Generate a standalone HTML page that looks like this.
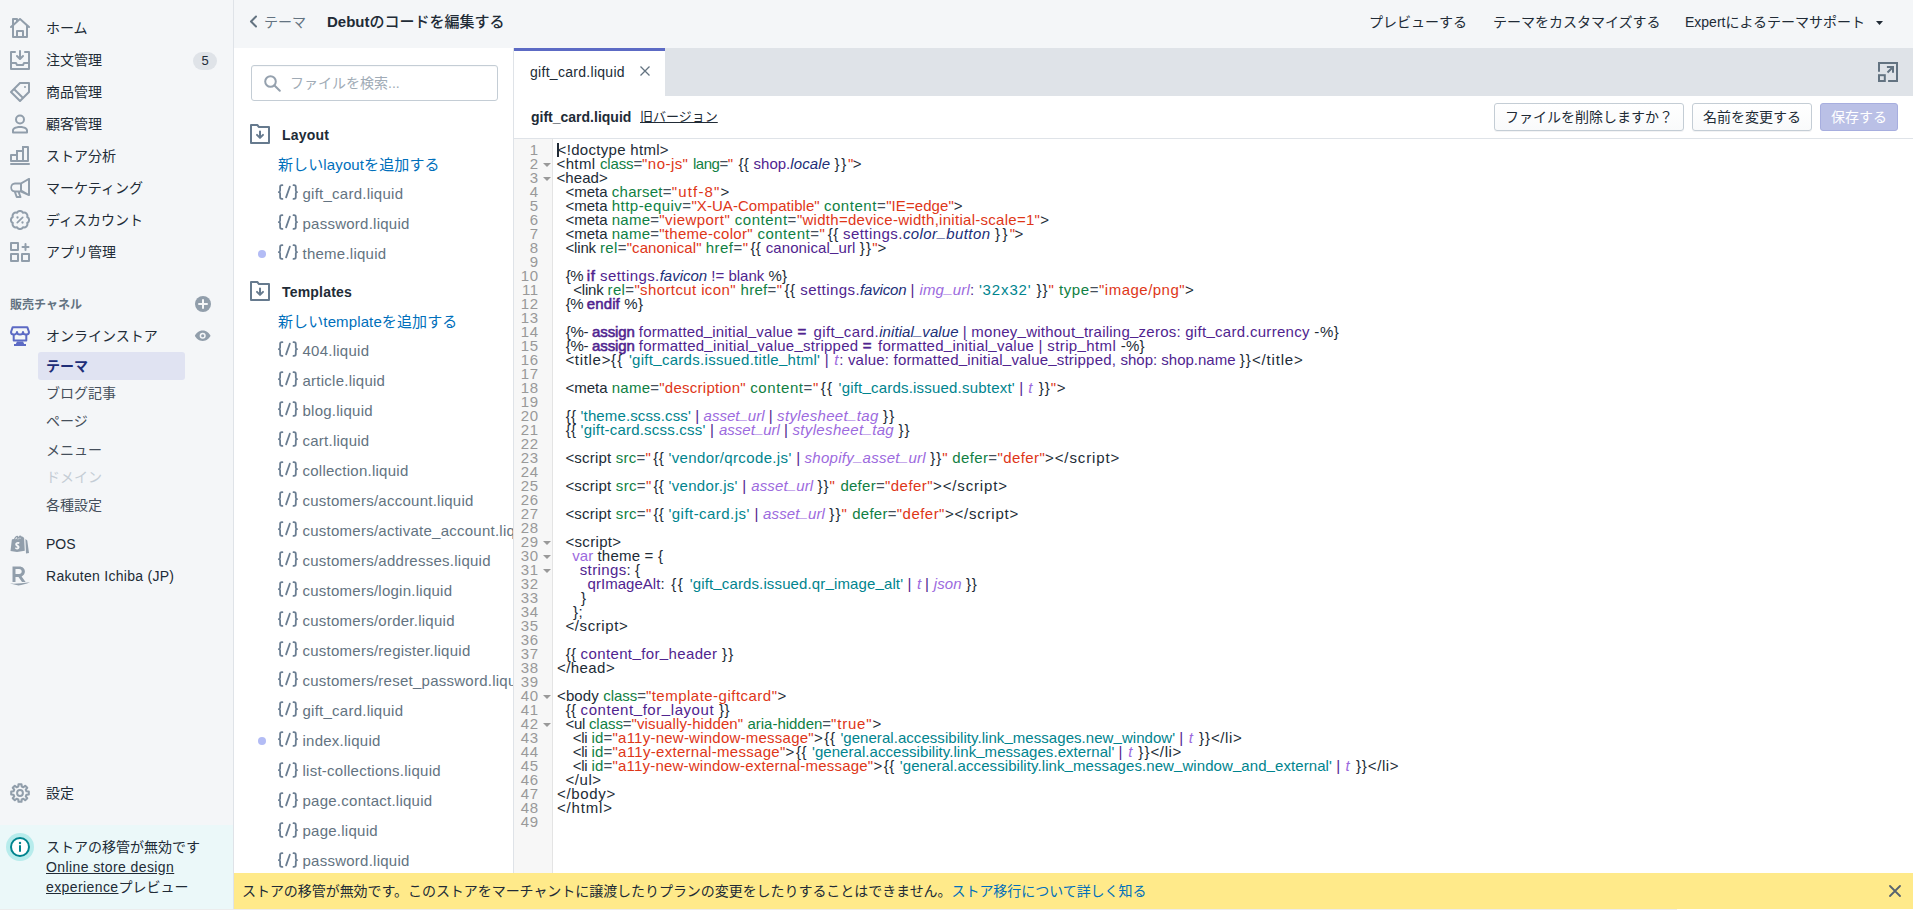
<!DOCTYPE html>
<html lang="ja">
<head>
<meta charset="utf-8">
<title>Debutのコードを編集する</title>
<style>
*{box-sizing:border-box;margin:0;padding:0}
html,body{width:1913px;height:910px;overflow:hidden;background:#f4f6f8}
body{font-family:"Liberation Sans","Noto Sans CJK JP",sans-serif;font-size:14px;color:#212b36;position:relative}
a{color:inherit}
/* NAV */
#nav{position:absolute;left:0;top:0;width:234px;height:910px;background:#f4f6f8;border-right:1px solid #dfe3e8}
.ni{position:absolute;left:0;width:233px;height:32px}
.ni svg{position:absolute;left:10px;top:6px;width:20px;height:20px;fill:#919eab}
.ni .t{position:absolute;left:46px;top:0;line-height:32px;font-size:14px;white-space:nowrap;color:#212b36}
.badge{position:absolute;left:193px;top:8px;width:24px;height:18px;border-radius:9px;background:#dfe3e8;text-align:center;font-size:13px;line-height:18px;color:#212b36}
.sub{position:absolute;left:46px;height:28px;line-height:28px;font-size:14px;color:#454f5b;white-space:nowrap}
#sel{position:absolute;left:38px;top:352px;width:147px;height:28px;border-radius:3px;background:#e0e3f2}
#chan{position:absolute;left:10px;top:295.500px;line-height:18px;font-size:12px;color:#637381;font-weight:700}
#info{position:absolute;left:0;top:825px;width:233px;height:85px;background:#ebf8f9}
#info .l{position:absolute;left:46px;line-height:20px;font-size:14px;white-space:nowrap;color:#212b36}
/* TOPBAR */
#top{position:absolute;left:234px;top:0;width:1679px;height:48px;background:#f4f6f8}
#top .x{position:absolute;top:11px;line-height:22px;font-size:14px;white-space:nowrap;color:#212b36}
/* TREE */
#tree{position:absolute;left:234px;top:48px;width:280px;height:825px;background:#fff;border-right:1px solid #dfe3e8;overflow:hidden}
#search{position:absolute;left:17px;top:17px;width:247px;height:36px;border:1px solid #c4cdd5;border-radius:3px;background:#fff;box-shadow:inset 0 1px 0 0 rgba(99,115,129,.05)}
#search span{position:absolute;left:38px;top:0;line-height:34px;font-size:14px;color:#a0abb6;white-space:nowrap}
.hd{position:absolute;left:48px;font-size:14px;font-weight:bold;line-height:20px;color:#212b36;white-space:nowrap;letter-spacing:.2px;margin-top:1px}
.fold{position:absolute;left:16px;width:20px;height:20px}
.lk{position:absolute;left:44px;font-size:15px;line-height:20px;color:#006fbb;white-space:nowrap;letter-spacing:.12px;margin-top:.5px}
.f{position:absolute;left:68px;font-size:15px;color:#637381;white-space:nowrap;line-height:20px;letter-spacing:.25px;margin-left:.5px}
.fi{position:absolute;left:43px;width:22px;height:18px}
.dot{position:absolute;left:24px;width:8px;height:8px;border-radius:4px;background:#b3bcf5}
/* EDITOR */
#ed{position:absolute;left:514px;top:48px;width:1399px;height:825px;background:#fff;overflow:hidden}
#tabs{position:absolute;left:0;top:0;width:1399px;height:48px;background:#dfe3e8}
#tab{position:absolute;left:0;top:0;width:151px;height:48px;background:#fff;border-top:3px solid #5c6ac4}
#tab span{position:absolute;left:16px;top:10.500px;line-height:20px;font-size:14px;color:#212b36;white-space:nowrap;letter-spacing:.29px}
#fh{position:absolute;left:0;top:48px;width:1399px;height:43px;border-bottom:1px solid #dfe3e8;background:#fff}
.btn{position:absolute;top:7px;height:28px;border:1px solid #c4cdd5;border-radius:3px;background:linear-gradient(#fff,#f9fafb);box-shadow:0 1px 0 0 rgba(22,29,37,.05);font-size:14px;line-height:26px;text-align:center;color:#212b36;white-space:nowrap}
#gut{position:absolute;left:0;top:91px;width:39px;height:734px;background:#f7f7f7;border-right:1px solid #e4e4e4}
.ln{position:absolute;right:13.500px;height:14px;line-height:14px;font-size:15px;color:#999;white-space:nowrap;letter-spacing:.5px}
.fa{position:absolute;left:29px;width:0;height:0;border-left:4px solid transparent;border-right:4px solid transparent;border-top:4px solid #999}
#code{position:absolute;left:0;top:95px;width:1399px;height:730px;font-size:15px;color:#212b36}
.cl{position:absolute;height:14px;line-height:14px;white-space:pre;font-size:15px}
.a{color:#108043}.e{color:#454f5b}.s{color:#de3618}.v{color:#50248f}.p{color:#202e78;font-style:italic}
.k{color:#50248f;-webkit-text-stroke:.55px #50248f}.f2{color:#9c6ade;font-style:italic}.q{color:#00848e}.j{color:#9c6ade}
.u{position:relative;top:-2px}
#cur{position:absolute;left:43px;top:0;width:2px;height:14px;background:#212b36}
/* BANNER */
#ban{position:absolute;left:234px;top:873px;width:1679px;height:36px;background:#ffea8a}
#strip{position:absolute;left:0;top:909px;width:1913px;height:1px;background:#ececec}
#strip i{position:absolute;left:1677px;top:0;width:236px;height:1px;background:#fff}
#ban span{position:absolute;left:8px;top:7px;line-height:22px;font-size:14px;white-space:nowrap;color:#212b36;letter-spacing:-.05px}
#ban a{color:#006fbb;text-decoration:none}
</style>
</head>
<body>
<div id="nav">
<div class="ni" style="top:12px"><svg viewBox="0 0 20 20"><path d="M19.664 8.252l-9-8a1 1 0 0 0-1.328 0L8 1.44V1a1 1 0 0 0-1-1H3a1 1 0 0 0-1 1v5.773L.336 8.252a1.001 1.001 0 0 0 1.328 1.496L2 9.449V19a1 1 0 0 0 1 1h14a1 1 0 0 0 1-1V9.449l.336.299a.997.997 0 0 0 1.411-.083 1.001 1.001 0 0 0-.083-1.413zM16 18h-2v-5a1 1 0 0 0-1-1H7a1 1 0 0 0-1 1v5H4V7.671l6-5.333 6 5.333V18zm-8 0v-4h4v4H8zM4 2h2v1.218L4 4.996V2z"/></svg><span class="t">ホーム</span></div>
<div class="ni" style="top:44px"><svg viewBox="0 0 20 20"><path fill-rule="evenodd" d="M2 18v-4h3.382l.723 1.447c.17.339.516.553.895.553h6c.379 0 .725-.214.895-.553L14.618 14H18v4H2zM19 1a1 1 0 0 1 1 1v17a1 1 0 0 1-1 1H1a1 1 0 0 1-1-1V2a1 1 0 0 1 1-1h4a1 1 0 0 1 0 2H2v9h4c.379 0 .725.214.895.553L7.618 14h4.764l.723-1.447c.17-.339.516-.553.895-.553h4V3h-3a1 1 0 0 1 0-2h4zM6.293 6.707a.999.999 0 1 1 1.414-1.414L9 6.586V1a1 1 0 0 1 2 0v5.586l1.293-1.293a.999.999 0 1 1 1.414 1.414l-3 3a.997.997 0 0 1-1.414 0l-3-3z"/></svg><span class="t">注文管理</span><span class="badge">5</span></div>
<div class="ni" style="top:76px"><svg viewBox="0 0 20 20"><path d="M19 0h-9c-.265 0-.52.106-.707.293l-9 9a.999.999 0 0 0 0 1.414l9 9a.997.997 0 0 0 1.414 0l9-9A.997.997 0 0 0 20 10V1a1 1 0 0 0-1-1zm-9 17.586L2.414 10 4 8.414 11.586 16 10 17.586zm8-8l-5 5L5.414 7l5-5H18v7.586zM15 6a1 1 0 1 0 0-2 1 1 0 0 0 0 2"/></svg><span class="t">商品管理</span></div>
<div class="ni" style="top:108px"><svg viewBox="0 0 20 20"><path d="M10 2.5a3 3 0 1 1 0 6 3 3 0 0 1 0-6zm0 8a5 5 0 1 0 0-10 5 5 0 0 0 0 10zm0 1.500c-5.200 0-8 2.200-8 4.300v2.200a1 1 0 0 0 1 1h14a1 1 0 0 0 1-1v-2.200c0-2.100-2.800-4.300-8-4.300zm6 5.500H4v-1.300c.2-.8 1.900-2.200 6-2.200s5.800 1.400 6 2.200v1.300z"/></svg><span class="t">顧客管理</span></div>
<div class="ni" style="top:140px"><svg viewBox="0 0 20 20"><path d="M1 17h18a1 1 0 0 1 0 2H1a1 1 0 0 1 0-2zM1 8h5V4h6V0h6a1 1 0 0 1 1 1v14a1 1 0 0 1-1 1H1a1 1 0 0 1-1-1V9a1 1 0 0 1 1-1zm1 2v4h4v-4H2zm6-4v8h4V6H8zm6-4v12h3V2h-3z"/></svg><span class="t">ストア分析</span></div>
<div class="ni" style="top:172px"><svg viewBox="0 0 20 20"><path d="M18.600.100a1 1 0 0 1 1.400.900v16a1 1 0 0 1-1.400.900L10.800 14.500H9.900l1.500 4.200a1 1 0 0 1-.9 1.300H6.700a1 1 0 0 1-.9-.700L4 14.300A5 5 0 0 1 5 4.500h5.800L18.600.100zM18 2.600l-6 3.400v6l6 3.400V2.600zM10 6.500H5a3 3 0 0 0 0 6h5v-6zM6.100 14.500l1.300 3.500h1.700l-1.300-3.500H6.100z"/></svg><span class="t">マーケティング</span></div>
<div class="ni" style="top:204px"><svg viewBox="0 0 20 20"><path d="M17.21 12.98A3.3 3.3 0 0 1 12.98 17.21A3.3 3.3 0 0 1 7.02 17.21A3.3 3.3 0 0 1 2.79 12.98A3.3 3.3 0 0 1 2.79 7.02A3.3 3.3 0 0 1 7.02 2.79A3.3 3.3 0 0 1 12.98 2.79A3.3 3.3 0 0 1 17.21 7.02A3.3 3.3 0 0 1 17.21 12.98z" fill="none" stroke="#919eab" stroke-width="2" stroke-linejoin="round"/><path d="M7.300 12.700l5.400-5.400" stroke="#919eab" stroke-width="1.700" stroke-linecap="round" fill="none"/><circle cx="7.500" cy="7.500" r="1.150"/><circle cx="12.500" cy="12.500" r="1.150"/></svg><span class="t">ディスカウント</span></div>
<div class="ni" style="top:236px"><svg viewBox="0 0 20 20"><path d="M1 0h7a1 1 0 0 1 1 1v7a1 1 0 0 1-1 1H1a1 1 0 0 1-1-1V1a1 1 0 0 1 1-1zm1 2v5h5V2H2zM1 11h7a1 1 0 0 1 1 1v7a1 1 0 0 1-1 1H1a1 1 0 0 1-1-1v-7a1 1 0 0 1 1-1zm1 2v5h5v-5H2zM12 11h7a1 1 0 0 1 1 1v7a1 1 0 0 1-1 1h-7a1 1 0 0 1-1-1v-7a1 1 0 0 1 1-1zm1 2v5h5v-5h-5zM15.500 1a1 1 0 0 1 1 1v2h2a1 1 0 0 1 0 2h-2v2a1 1 0 0 1-2 0V6h-2a1 1 0 0 1 0-2h2V2a1 1 0 0 1 1-1z"/></svg><span class="t">アプリ管理</span></div>

<div id="chan">販売チャネル</div>
<svg style="position:absolute;left:195px;top:296px;width:16px;height:16px" viewBox="0 0 16 16"><circle cx="8" cy="8" r="8" fill="#919eab"/><path d="M8 4v8M4 8h8" stroke="#f4f6f8" stroke-width="2" stroke-linecap="round"/></svg>

<div class="ni" style="top:320px"><svg viewBox="0 0 20 20" style="fill:none"><path d="M2.700 1.200H17.300L19 6a3 2.600 0 0 1-6 0a3 2.600 0 0 1-6 0a3 2.600 0 0 1-6 0z" stroke="#5c6ac4" stroke-width="2" stroke-linejoin="round"/><path d="M3.700 9v5.500H16.300V9" stroke="#5c6ac4" stroke-width="2" stroke-linejoin="round"/><path d="M7 15.500h6l1.200 2.500H16v2H4v-2h1.800z" fill="#5c6ac4"/></svg><span class="t">オンラインストア</span>
<svg viewBox="0 0 20 20" style="left:194.200px;top:7.300px;width:17.400px;height:17.400px"><path d="M10 4C5.500 4 2.300 7.200 1 10c1.300 2.800 4.500 6 9 6s7.700-3.200 9-6c-1.300-2.800-4.500-6-9-6zm0 9.500a3.500 3.500 0 1 1 0-7 3.500 3.500 0 0 1 0 7zm0-5.300a1.800 1.800 0 1 0 0 3.600 1.800 1.800 0 0 0 0-3.600z"/></svg></div>
<div id="sel"></div>
<div class="sub" style="top:352px;color:#202e78;font-weight:bold">テーマ</div>
<div class="sub" style="top:379px">ブログ記事</div>
<div class="sub" style="top:407px">ページ</div>
<div class="sub" style="top:435.500px">メニュー</div>
<div class="sub" style="top:463px;color:#c4cdd5">ドメイン</div>
<div class="sub" style="top:491px">各種設定</div>

<div class="ni" style="top:528px"><svg viewBox="0 0 20 20"><path d="M8.500 1.500c.3-.9 1-1.500 1.700-1.500.6 0 1.100.4 1.400 1.100l1.300.1 1.200 1.200.7 12.800L7 16.500.500 15.400 1.800 4.600c0-.4.300-.7.700-.800L4 3.400C4.700 1.800 5.800.300 7.300.300c.5 0 .9.400 1.200 1.200zM7.200 1.400c-.8.100-1.600 1.200-2 2.400l1.400-.4c.1-.9.300-1.500.6-2zm1 .8c-.3.400-.5 1-.6 1.900l1-.3c-.1-.7-.2-1.200-.4-1.600zm1.400 1.300l.9-.3c-.1-.8-.3-1.300-.5-1.300s-.3.500-.4 1.600zM8 6.500c-1.700 0-2.800 1-2.800 2.300 0 2 2.300 2 2.300 3 0 .3-.2.500-.6.500-.7 0-1.400-.5-1.400-.5l-.4 1.400s.7.700 2 .7c1.400 0 2.400-.8 2.400-2.300 0-2-2.300-2.100-2.300-2.900 0-.2.100-.5.700-.5.600 0 1.100.3 1.100.3l.5-1.600S9 6.500 8 6.500zM15.400 3.600l1.600 1.100c.2.100.3.300.3.500l1.700 12.200-3 .6-.6-14.400z" transform="translate(0,1.500)"/></svg><span class="t">POS</span></div>
<div class="ni" style="top:560px"><svg viewBox="0 0 20 20"><path fill-rule="evenodd" d="M2.500.400h6.800c3.400 0 5.600 2.100 5.600 5.200 0 2.300-1.300 4-3.300 4.800l4 5.700h-3.600l-3.500-5.200H5.500v5.200H2.500V.400zm3 2.700v5h3.600c1.600 0 2.600-1 2.600-2.500s-1-2.500-2.600-2.500H5.500z"/><path d="M0 17.500c5 .400 12-.100 20-1.300-4 1.700-8 2.800-11.500 3.400z"/></svg><span class="t" style="letter-spacing:.28px">Rakuten Ichiba (JP)</span></div>

<div class="ni" style="top:777px"><svg viewBox="0 0 20 20"><path d="M8.32 3.51L8.53 1.22L11.47 1.22L11.68 3.51L13.40 4.23L15.17 2.75L17.25 4.83L15.77 6.60L16.49 8.32L18.78 8.53L18.78 11.47L16.49 11.68L15.77 13.40L17.25 15.17L15.17 17.25L13.40 15.77L11.68 16.49L11.47 18.78L8.53 18.78L8.32 16.49L6.60 15.77L4.83 17.25L2.75 15.17L4.23 13.40L3.51 11.68L1.22 11.47L1.22 8.53L3.51 8.32L4.23 6.60L2.75 4.83L4.83 2.75L6.60 4.23z" fill="none" stroke="#919eab" stroke-width="2.100" stroke-linejoin="round"/><circle cx="10" cy="10" r="2.900" fill="none" stroke="#919eab" stroke-width="2"/></svg><span class="t">設定</span></div>

<div id="info">
<svg style="position:absolute;left:6px;top:8px;width:28px;height:28px" viewBox="0 0 28 28"><circle cx="14" cy="14" r="14" fill="#b7ecec"/><circle cx="14" cy="14" r="9" fill="#fff" stroke="#00848e" stroke-width="2"/><path d="M14 13v5" stroke="#00848e" stroke-width="2" stroke-linecap="round"/><circle cx="14" cy="10" r="1.200" fill="#00848e"/></svg>
<span class="l" style="top:12px">ストアの移管が無効です</span>
<span class="l" style="top:32px;text-decoration:underline;letter-spacing:.4px">Online store design</span>
<span class="l" style="top:52px"><span style="text-decoration:underline;letter-spacing:.4px">experience</span>プレビュー</span>
</div>
</div>
<div id="top">
<svg style="position:absolute;left:15px;top:15px;width:9px;height:13px" viewBox="0 0 9 13"><path d="M7 1.500L2 6.500l5 5" fill="none" stroke="#637381" stroke-width="2" stroke-linecap="round" stroke-linejoin="round"/></svg>
<span class="x" style="left:30px;color:#637381">テーマ</span>
<span class="x" style="left:93px;font-size:15px"><b>Debut</b><span style="font-weight:500">のコードを編集する</span></span>
<span class="x" style="left:1135px">プレビューする</span>
<span class="x" style="left:1259px">テーマをカスタマイズする</span>
<span class="x" style="left:1451px">Expertによるテーマサポート</span>
<svg style="position:absolute;left:1642px;top:21px;width:7px;height:4px" viewBox="0 0 7 4"><path d="M0 0h7L3.500 4z" fill="#212b36"/></svg>
</div>
<div id="tree">
<div id="search"><svg style="position:absolute;left:12px;top:9px;width:17px;height:17px" viewBox="0 0 17 17"><circle cx="6.500" cy="6.500" r="5.300" fill="none" stroke="#95a1ae" stroke-width="2"/><path d="M10.500 10.500l5.300 5.300" stroke="#95a1ae" stroke-width="2" stroke-linecap="round"/></svg><span>ファイルを検索...</span></div>
<svg class="fold" style="top:76px" viewBox="0 0 20 20"><path d="M1 1H7.300L9 3.100H19V19H1z" fill="none" stroke="#667a8e" stroke-width="2" stroke-linejoin="round"/><path d="M10 7.600V13.500M7 10.900L10 13.900l3-3" fill="none" stroke="#667a8e" stroke-width="2" stroke-linecap="round" stroke-linejoin="round"/></svg><div class="hd" style="top:76px">Layout</div>
<div class="lk" style="top:106px">新しいlayoutを追加する</div>
<svg class="fi" style="top:136px" viewBox="0 0 22 18"><path d="M5.400 1.200H4.900A1.800 1.800 0 0 0 3.100 3V6.600Q3.100 8.050 1.800 8.050Q3.100 8.050 3.100 9.500V13.100A1.800 1.800 0 0 0 4.900 14.900H5.400M16.500 1.200H17A1.800 1.800 0 0 1 18.800 3V6.600Q18.800 8.050 20.100 8.050Q18.800 8.050 18.800 9.500V13.100A1.800 1.800 0 0 1 17 14.900H16.500M9.100 13.400L12.800 2.700" fill="none" stroke="#6a7d91" stroke-width="1.800" stroke-linecap="round" stroke-linejoin="round"/></svg><div class="f" style="top:135.5px">gift_card.liquid</div>
<svg class="fi" style="top:166px" viewBox="0 0 22 18"><path d="M5.400 1.200H4.900A1.800 1.800 0 0 0 3.100 3V6.600Q3.100 8.050 1.800 8.050Q3.100 8.050 3.100 9.500V13.100A1.800 1.800 0 0 0 4.900 14.900H5.400M16.500 1.200H17A1.800 1.800 0 0 1 18.800 3V6.600Q18.800 8.050 20.100 8.050Q18.800 8.050 18.800 9.500V13.100A1.800 1.800 0 0 1 17 14.900H16.500M9.100 13.400L12.800 2.700" fill="none" stroke="#6a7d91" stroke-width="1.800" stroke-linecap="round" stroke-linejoin="round"/></svg><div class="f" style="top:165.5px">password.liquid</div>
<div class="dot" style="top:201.5px"></div><svg class="fi" style="top:196px" viewBox="0 0 22 18"><path d="M5.400 1.200H4.900A1.800 1.800 0 0 0 3.100 3V6.600Q3.100 8.050 1.800 8.050Q3.100 8.050 3.100 9.500V13.100A1.800 1.800 0 0 0 4.900 14.900H5.400M16.500 1.200H17A1.800 1.800 0 0 1 18.800 3V6.600Q18.800 8.050 20.100 8.050Q18.800 8.050 18.800 9.500V13.100A1.800 1.800 0 0 1 17 14.900H16.500M9.100 13.400L12.800 2.700" fill="none" stroke="#6a7d91" stroke-width="1.800" stroke-linecap="round" stroke-linejoin="round"/></svg><div class="f" style="top:195.5px">theme.liquid</div>
<svg class="fold" style="top:233px" viewBox="0 0 20 20"><path d="M1 1H7.300L9 3.100H19V19H1z" fill="none" stroke="#667a8e" stroke-width="2" stroke-linejoin="round"/><path d="M10 7.600V13.500M7 10.900L10 13.900l3-3" fill="none" stroke="#667a8e" stroke-width="2" stroke-linecap="round" stroke-linejoin="round"/></svg><div class="hd" style="top:233px">Templates</div>
<div class="lk" style="top:263px">新しいtemplateを追加する</div>
<svg class="fi" style="top:293px" viewBox="0 0 22 18"><path d="M5.400 1.200H4.900A1.800 1.800 0 0 0 3.100 3V6.600Q3.100 8.050 1.800 8.050Q3.100 8.050 3.100 9.500V13.100A1.800 1.800 0 0 0 4.900 14.900H5.400M16.500 1.200H17A1.800 1.800 0 0 1 18.800 3V6.600Q18.800 8.050 20.100 8.050Q18.800 8.050 18.800 9.500V13.100A1.800 1.800 0 0 1 17 14.900H16.500M9.100 13.400L12.800 2.700" fill="none" stroke="#6a7d91" stroke-width="1.800" stroke-linecap="round" stroke-linejoin="round"/></svg><div class="f" style="top:292.5px">404.liquid</div>
<svg class="fi" style="top:323px" viewBox="0 0 22 18"><path d="M5.400 1.200H4.900A1.800 1.800 0 0 0 3.100 3V6.600Q3.100 8.050 1.800 8.050Q3.100 8.050 3.100 9.500V13.100A1.800 1.800 0 0 0 4.900 14.900H5.400M16.500 1.200H17A1.800 1.800 0 0 1 18.800 3V6.600Q18.800 8.050 20.100 8.050Q18.800 8.050 18.800 9.500V13.100A1.800 1.800 0 0 1 17 14.900H16.500M9.100 13.400L12.800 2.700" fill="none" stroke="#6a7d91" stroke-width="1.800" stroke-linecap="round" stroke-linejoin="round"/></svg><div class="f" style="top:322.5px">article.liquid</div>
<svg class="fi" style="top:353px" viewBox="0 0 22 18"><path d="M5.400 1.200H4.900A1.800 1.800 0 0 0 3.100 3V6.600Q3.100 8.050 1.800 8.050Q3.100 8.050 3.100 9.500V13.100A1.800 1.800 0 0 0 4.900 14.900H5.400M16.500 1.200H17A1.800 1.800 0 0 1 18.800 3V6.600Q18.800 8.050 20.100 8.050Q18.800 8.050 18.800 9.500V13.100A1.800 1.800 0 0 1 17 14.900H16.500M9.100 13.400L12.800 2.700" fill="none" stroke="#6a7d91" stroke-width="1.800" stroke-linecap="round" stroke-linejoin="round"/></svg><div class="f" style="top:352.5px">blog.liquid</div>
<svg class="fi" style="top:383px" viewBox="0 0 22 18"><path d="M5.400 1.200H4.900A1.800 1.800 0 0 0 3.100 3V6.600Q3.100 8.050 1.800 8.050Q3.100 8.050 3.100 9.500V13.100A1.800 1.800 0 0 0 4.900 14.900H5.400M16.500 1.200H17A1.800 1.800 0 0 1 18.800 3V6.600Q18.800 8.050 20.100 8.050Q18.800 8.050 18.800 9.500V13.100A1.800 1.800 0 0 1 17 14.900H16.500M9.100 13.400L12.800 2.700" fill="none" stroke="#6a7d91" stroke-width="1.800" stroke-linecap="round" stroke-linejoin="round"/></svg><div class="f" style="top:382.5px">cart.liquid</div>
<svg class="fi" style="top:413px" viewBox="0 0 22 18"><path d="M5.400 1.200H4.900A1.800 1.800 0 0 0 3.100 3V6.600Q3.100 8.050 1.800 8.050Q3.100 8.050 3.100 9.500V13.100A1.800 1.800 0 0 0 4.900 14.900H5.400M16.500 1.200H17A1.800 1.800 0 0 1 18.800 3V6.600Q18.800 8.050 20.100 8.050Q18.800 8.050 18.800 9.500V13.100A1.800 1.800 0 0 1 17 14.900H16.500M9.100 13.400L12.800 2.700" fill="none" stroke="#6a7d91" stroke-width="1.800" stroke-linecap="round" stroke-linejoin="round"/></svg><div class="f" style="top:412.5px">collection.liquid</div>
<svg class="fi" style="top:443px" viewBox="0 0 22 18"><path d="M5.400 1.200H4.900A1.800 1.800 0 0 0 3.100 3V6.600Q3.100 8.050 1.800 8.050Q3.100 8.050 3.100 9.500V13.100A1.800 1.800 0 0 0 4.900 14.900H5.400M16.500 1.200H17A1.800 1.800 0 0 1 18.800 3V6.600Q18.800 8.050 20.100 8.050Q18.800 8.050 18.800 9.500V13.100A1.800 1.800 0 0 1 17 14.900H16.500M9.100 13.400L12.800 2.700" fill="none" stroke="#6a7d91" stroke-width="1.800" stroke-linecap="round" stroke-linejoin="round"/></svg><div class="f" style="top:442.5px">customers/account.liquid</div>
<svg class="fi" style="top:473px" viewBox="0 0 22 18"><path d="M5.400 1.200H4.900A1.800 1.800 0 0 0 3.100 3V6.600Q3.100 8.050 1.800 8.050Q3.100 8.050 3.100 9.500V13.100A1.800 1.800 0 0 0 4.900 14.900H5.400M16.500 1.200H17A1.800 1.800 0 0 1 18.800 3V6.600Q18.800 8.050 20.100 8.050Q18.800 8.050 18.800 9.500V13.100A1.800 1.800 0 0 1 17 14.900H16.500M9.100 13.400L12.800 2.700" fill="none" stroke="#6a7d91" stroke-width="1.800" stroke-linecap="round" stroke-linejoin="round"/></svg><div class="f" style="top:472.5px">customers/activate_account.liquid</div>
<svg class="fi" style="top:503px" viewBox="0 0 22 18"><path d="M5.400 1.200H4.900A1.800 1.800 0 0 0 3.100 3V6.600Q3.100 8.050 1.800 8.050Q3.100 8.050 3.100 9.500V13.100A1.800 1.800 0 0 0 4.900 14.900H5.400M16.500 1.200H17A1.800 1.800 0 0 1 18.800 3V6.600Q18.800 8.050 20.100 8.050Q18.800 8.050 18.800 9.500V13.100A1.800 1.800 0 0 1 17 14.900H16.500M9.100 13.400L12.800 2.700" fill="none" stroke="#6a7d91" stroke-width="1.800" stroke-linecap="round" stroke-linejoin="round"/></svg><div class="f" style="top:502.5px">customers/addresses.liquid</div>
<svg class="fi" style="top:533px" viewBox="0 0 22 18"><path d="M5.400 1.200H4.900A1.800 1.800 0 0 0 3.100 3V6.600Q3.100 8.050 1.800 8.050Q3.100 8.050 3.100 9.500V13.100A1.800 1.800 0 0 0 4.900 14.900H5.400M16.500 1.200H17A1.800 1.800 0 0 1 18.800 3V6.600Q18.800 8.050 20.100 8.050Q18.800 8.050 18.800 9.500V13.100A1.800 1.800 0 0 1 17 14.900H16.500M9.100 13.400L12.800 2.700" fill="none" stroke="#6a7d91" stroke-width="1.800" stroke-linecap="round" stroke-linejoin="round"/></svg><div class="f" style="top:532.5px">customers/login.liquid</div>
<svg class="fi" style="top:563px" viewBox="0 0 22 18"><path d="M5.400 1.200H4.900A1.800 1.800 0 0 0 3.100 3V6.600Q3.100 8.050 1.800 8.050Q3.100 8.050 3.100 9.500V13.100A1.800 1.800 0 0 0 4.900 14.900H5.400M16.500 1.200H17A1.800 1.800 0 0 1 18.800 3V6.600Q18.800 8.050 20.100 8.050Q18.800 8.050 18.800 9.500V13.100A1.800 1.800 0 0 1 17 14.900H16.500M9.100 13.400L12.800 2.700" fill="none" stroke="#6a7d91" stroke-width="1.800" stroke-linecap="round" stroke-linejoin="round"/></svg><div class="f" style="top:562.5px">customers/order.liquid</div>
<svg class="fi" style="top:593px" viewBox="0 0 22 18"><path d="M5.400 1.200H4.900A1.800 1.800 0 0 0 3.100 3V6.600Q3.100 8.050 1.800 8.050Q3.100 8.050 3.100 9.500V13.100A1.800 1.800 0 0 0 4.900 14.900H5.400M16.500 1.200H17A1.800 1.800 0 0 1 18.800 3V6.600Q18.800 8.050 20.100 8.050Q18.800 8.050 18.800 9.500V13.100A1.800 1.800 0 0 1 17 14.900H16.500M9.100 13.400L12.800 2.700" fill="none" stroke="#6a7d91" stroke-width="1.800" stroke-linecap="round" stroke-linejoin="round"/></svg><div class="f" style="top:592.5px">customers/register.liquid</div>
<svg class="fi" style="top:623px" viewBox="0 0 22 18"><path d="M5.400 1.200H4.900A1.800 1.800 0 0 0 3.100 3V6.600Q3.100 8.050 1.800 8.050Q3.100 8.050 3.100 9.500V13.100A1.800 1.800 0 0 0 4.900 14.900H5.400M16.500 1.200H17A1.800 1.800 0 0 1 18.800 3V6.600Q18.800 8.050 20.100 8.050Q18.800 8.050 18.800 9.500V13.100A1.800 1.800 0 0 1 17 14.900H16.500M9.100 13.400L12.800 2.700" fill="none" stroke="#6a7d91" stroke-width="1.800" stroke-linecap="round" stroke-linejoin="round"/></svg><div class="f" style="top:622.5px">customers/reset_password.liquid</div>
<svg class="fi" style="top:653px" viewBox="0 0 22 18"><path d="M5.400 1.200H4.900A1.800 1.800 0 0 0 3.100 3V6.600Q3.100 8.050 1.800 8.050Q3.100 8.050 3.100 9.500V13.100A1.800 1.800 0 0 0 4.900 14.900H5.400M16.500 1.200H17A1.800 1.800 0 0 1 18.800 3V6.600Q18.800 8.050 20.100 8.050Q18.800 8.050 18.800 9.500V13.100A1.800 1.800 0 0 1 17 14.900H16.500M9.100 13.400L12.800 2.700" fill="none" stroke="#6a7d91" stroke-width="1.800" stroke-linecap="round" stroke-linejoin="round"/></svg><div class="f" style="top:652.5px">gift_card.liquid</div>
<div class="dot" style="top:688.5px"></div><svg class="fi" style="top:683px" viewBox="0 0 22 18"><path d="M5.400 1.200H4.900A1.800 1.800 0 0 0 3.100 3V6.600Q3.100 8.050 1.800 8.050Q3.100 8.050 3.100 9.500V13.100A1.800 1.800 0 0 0 4.900 14.900H5.400M16.500 1.200H17A1.800 1.800 0 0 1 18.800 3V6.600Q18.800 8.050 20.100 8.050Q18.800 8.050 18.800 9.500V13.100A1.800 1.800 0 0 1 17 14.900H16.500M9.100 13.400L12.800 2.700" fill="none" stroke="#6a7d91" stroke-width="1.800" stroke-linecap="round" stroke-linejoin="round"/></svg><div class="f" style="top:682.5px">index.liquid</div>
<svg class="fi" style="top:714px" viewBox="0 0 22 18"><path d="M5.400 1.200H4.900A1.800 1.800 0 0 0 3.100 3V6.600Q3.100 8.050 1.800 8.050Q3.100 8.050 3.100 9.500V13.100A1.800 1.800 0 0 0 4.900 14.900H5.400M16.500 1.200H17A1.800 1.800 0 0 1 18.800 3V6.600Q18.800 8.050 20.100 8.050Q18.800 8.050 18.800 9.500V13.100A1.800 1.800 0 0 1 17 14.900H16.500M9.100 13.400L12.800 2.700" fill="none" stroke="#6a7d91" stroke-width="1.800" stroke-linecap="round" stroke-linejoin="round"/></svg><div class="f" style="top:713px">list-collections.liquid</div>
<svg class="fi" style="top:744px" viewBox="0 0 22 18"><path d="M5.400 1.200H4.900A1.800 1.800 0 0 0 3.100 3V6.600Q3.100 8.050 1.800 8.050Q3.100 8.050 3.100 9.500V13.100A1.800 1.800 0 0 0 4.900 14.900H5.400M16.500 1.200H17A1.800 1.800 0 0 1 18.800 3V6.600Q18.800 8.050 20.100 8.050Q18.800 8.050 18.800 9.500V13.100A1.800 1.800 0 0 1 17 14.900H16.500M9.100 13.400L12.800 2.700" fill="none" stroke="#6a7d91" stroke-width="1.800" stroke-linecap="round" stroke-linejoin="round"/></svg><div class="f" style="top:743px">page.contact.liquid</div>
<svg class="fi" style="top:774px" viewBox="0 0 22 18"><path d="M5.400 1.200H4.900A1.800 1.800 0 0 0 3.100 3V6.600Q3.100 8.050 1.800 8.050Q3.100 8.050 3.100 9.500V13.100A1.800 1.800 0 0 0 4.900 14.900H5.400M16.500 1.200H17A1.800 1.800 0 0 1 18.800 3V6.600Q18.800 8.050 20.100 8.050Q18.800 8.050 18.800 9.500V13.100A1.800 1.800 0 0 1 17 14.900H16.500M9.100 13.400L12.800 2.700" fill="none" stroke="#6a7d91" stroke-width="1.800" stroke-linecap="round" stroke-linejoin="round"/></svg><div class="f" style="top:773px">page.liquid</div>
<svg class="fi" style="top:804px" viewBox="0 0 22 18"><path d="M5.400 1.200H4.900A1.800 1.800 0 0 0 3.100 3V6.600Q3.100 8.050 1.800 8.050Q3.100 8.050 3.100 9.500V13.100A1.800 1.800 0 0 0 4.900 14.900H5.400M16.500 1.200H17A1.800 1.800 0 0 1 18.800 3V6.600Q18.800 8.050 20.100 8.050Q18.800 8.050 18.800 9.500V13.100A1.800 1.800 0 0 1 17 14.900H16.500M9.100 13.400L12.800 2.700" fill="none" stroke="#6a7d91" stroke-width="1.800" stroke-linecap="round" stroke-linejoin="round"/></svg><div class="f" style="top:803px">password.liquid</div>
</div>
<div id="ed">
<div id="tabs"><div id="tab"><span>gift_card.liquid</span><svg style="position:absolute;left:126px;top:15px;width:10px;height:10px" viewBox="0 0 10 10"><path d="M.5.5l9 9M9.500.5l-9 9" stroke="#637381" stroke-width="1.300" fill="none"/></svg></div>
<svg style="position:absolute;left:1364px;top:14px;width:20px;height:20px" viewBox="0 0 20 20"><path d="M1 9.700V1H19V19H10.100M8.900 5H15V10.800M15 5L9.500 10.500" fill="none" stroke="#637381" stroke-width="2"/><rect x="1" y="13.200" width="5.800" height="5.800" fill="none" stroke="#637381" stroke-width="2"/></svg></div>
<div id="fh"><span style="position:absolute;left:17px;top:10px;line-height:22px;font-size:14px;font-weight:bold;white-space:nowrap">gift_card.liquid</span><span style="position:absolute;left:126px;top:10px;line-height:22px;font-size:13px;text-decoration:underline;white-space:nowrap">旧バージョン</span>
<div class="btn" style="left:980px;width:190px">ファイルを削除しますか？</div><div class="btn" style="left:1178px;width:120px">名前を変更する</div><div class="btn" style="left:1306px;width:78px;background:#bac0e6;border-color:#a7aedf;color:#fff;box-shadow:none">保存する</div></div>
<div id="gut"><div class="ln" style="top:4px">1</div><div class="ln" style="top:18px">2</div><div class="fa" style="top:24px"></div><div class="ln" style="top:32px">3</div><div class="fa" style="top:38px"></div><div class="ln" style="top:46px">4</div><div class="ln" style="top:60px">5</div><div class="ln" style="top:74px">6</div><div class="ln" style="top:88px">7</div><div class="ln" style="top:102px">8</div><div class="ln" style="top:116px">9</div><div class="ln" style="top:130px">10</div><div class="ln" style="top:144px">11</div><div class="ln" style="top:158px">12</div><div class="ln" style="top:172px">13</div><div class="ln" style="top:186px">14</div><div class="ln" style="top:200px">15</div><div class="ln" style="top:214px">16</div><div class="ln" style="top:228px">17</div><div class="ln" style="top:242px">18</div><div class="ln" style="top:256px">19</div><div class="ln" style="top:270px">20</div><div class="ln" style="top:284px">21</div><div class="ln" style="top:298px">22</div><div class="ln" style="top:312px">23</div><div class="ln" style="top:326px">24</div><div class="ln" style="top:340px">25</div><div class="ln" style="top:354px">26</div><div class="ln" style="top:368px">27</div><div class="ln" style="top:382px">28</div><div class="ln" style="top:396px">29</div><div class="fa" style="top:402px"></div><div class="ln" style="top:410px">30</div><div class="fa" style="top:416px"></div><div class="ln" style="top:424px">31</div><div class="fa" style="top:430px"></div><div class="ln" style="top:438px">32</div><div class="ln" style="top:452px">33</div><div class="ln" style="top:466px">34</div><div class="ln" style="top:480px">35</div><div class="ln" style="top:494px">36</div><div class="ln" style="top:508px">37</div><div class="ln" style="top:522px">38</div><div class="ln" style="top:536px">39</div><div class="ln" style="top:550px">40</div><div class="fa" style="top:556px"></div><div class="ln" style="top:564px">41</div><div class="ln" style="top:578px">42</div><div class="fa" style="top:584px"></div><div class="ln" style="top:592px">43</div><div class="ln" style="top:606px">44</div><div class="ln" style="top:620px">45</div><div class="ln" style="top:634px">46</div><div class="ln" style="top:648px">47</div><div class="ln" style="top:662px">48</div><div class="ln" style="top:676px">49</div></div>
<div id="code"><div id="cur"></div>
<div class="cl" id="s1_0" style="left:43.6px;top:0px;letter-spacing:0.304px">&lt;!doctype html&gt;</div>
<div class="cl" id="s2_0" style="left:42.5px;top:14px;letter-spacing:0.372px">&lt;html </div>
<div class="cl" id="s2_1" style="left:86.0px;top:14px;letter-spacing:-0.142px"><span class="a">class</span><span class="e">=</span></div>
<div class="cl" id="s2_2" style="left:128.1px;top:14px;letter-spacing:0.445px"><span class="s">"no-js"</span> </div>
<div class="cl" id="s2_3" style="left:179.0px;top:14px;letter-spacing:-0.485px"><span class="a">lang</span><span class="e">=</span></div>
<div class="cl" id="s2_4" style="left:213.7px;top:14px;letter-spacing:2.500px"><span class="s">"</span></div>
<div class="cl" id="s2_5" style="left:224.5px;top:14px;letter-spacing:0.304px">{{ </div>
<div class="cl" id="s2_6" style="left:239.6px;top:14px;letter-spacing:-0.001px"><span class="v">shop.</span></div>
<div class="cl" id="s2_7" style="left:276.3px;top:14px;letter-spacing:0.104px"><span class="p">locale</span> </div>
<div class="cl" id="s2_8" style="left:320.4px;top:14px;letter-spacing:1.784px">}}</div>
<div class="cl" id="s2_9" style="left:334.0px;top:14px;letter-spacing:-0.528px"><span class="s">"</span></div>
<div class="cl" id="s2_10" style="left:338.8px;top:14px;letter-spacing:0.234px">&gt;</div>
<div class="cl" id="s3_0" style="left:42.5px;top:28px;letter-spacing:0.068px">&lt;head&gt;</div>
<div class="cl" id="s4_0" style="left:51.4px;top:42px;letter-spacing:0.020px">&lt;meta </div>
<div class="cl" id="s4_1" style="left:97.8px;top:42px;letter-spacing:0.254px"><span class="a">charset</span><span class="e">=</span></div>
<div class="cl" id="s4_2" style="left:157.8px;top:42px;letter-spacing:1.161px"><span class="s">"utf-8"</span></div>
<div class="cl" id="s4_3" style="left:206.6px;top:42px;letter-spacing:0.734px">&gt;</div>
<div class="cl" id="s5_0" style="left:51.4px;top:56px;letter-spacing:0.020px">&lt;meta </div>
<div class="cl" id="s5_1" style="left:97.8px;top:56px;letter-spacing:0.460px"><span class="a">http-equiv</span><span class="e">=</span></div>
<div class="cl" id="s5_2" style="left:177.5px;top:56px;letter-spacing:0.048px"><span class="s">"X-UA-Compatible"</span> </div>
<div class="cl" id="s5_3" style="left:309.9px;top:56px;letter-spacing:0.539px"><span class="a">content</span><span class="e">=</span></div>
<div class="cl" id="s5_4" style="left:372.2px;top:56px;letter-spacing:0.072px"><span class="s">"IE=edge"</span></div>
<div class="cl" id="s5_5" style="left:439.8px;top:56px;letter-spacing:0.634px">&gt;</div>
<div class="cl" id="s6_0" style="left:51.4px;top:70px;letter-spacing:0.020px">&lt;meta </div>
<div class="cl" id="s6_1" style="left:97.8px;top:70px;letter-spacing:0.221px"><span class="a">name</span><span class="e">=</span></div>
<div class="cl" id="s6_2" style="left:145.2px;top:70px;letter-spacing:0.447px"><span class="s">"viewport"</span> </div>
<div class="cl" id="s6_3" style="left:220.8px;top:70px;letter-spacing:0.514px"><span class="a">content</span><span class="e">=</span></div>
<div class="cl" id="s6_4" style="left:282.9px;top:70px;letter-spacing:0.279px"><span class="s">"width=device-width,initial-scale=1"</span></div>
<div class="cl" id="s6_5" style="left:526.2px;top:70px;letter-spacing:0.534px">&gt;</div>
<div class="cl" id="s7_0" style="left:51.4px;top:84px;letter-spacing:0.020px">&lt;meta </div>
<div class="cl" id="s7_1" style="left:97.8px;top:84px;letter-spacing:0.221px"><span class="a">name</span><span class="e">=</span></div>
<div class="cl" id="s7_2" style="left:145.2px;top:84px;letter-spacing:0.298px"><span class="s">"theme-color"</span> </div>
<div class="cl" id="s7_3" style="left:243.4px;top:84px;letter-spacing:0.514px"><span class="a">content</span><span class="e">=</span></div>
<div class="cl" id="s7_4" style="left:305.5px;top:84px;letter-spacing:2.500px"><span class="s">"</span></div>
<div class="cl" id="s7_5" style="left:313.8px;top:84px;letter-spacing:0.338px">{{ </div>
<div class="cl" id="s7_6" style="left:329.0px;top:84px;letter-spacing:0.447px"><span class="v">settings.</span></div>
<div class="cl" id="s7_7" style="left:388.9px;top:84px;letter-spacing:0.419px"><span class="p">color<span class="u">_</span>button</span> </div>
<div class="cl" id="s7_8" style="left:481.1px;top:84px;letter-spacing:2.334px">}}</div>
<div class="cl" id="s7_9" style="left:495.8px;top:84px;letter-spacing:-0.728px"><span class="s">"</span></div>
<div class="cl" id="s7_10" style="left:500.4px;top:84px;letter-spacing:0.234px">&gt;</div>
<div class="cl" id="s8_0" style="left:51.4px;top:98px;letter-spacing:-0.140px">&lt;link </div>
<div class="cl" id="s8_1" style="left:86.0px;top:98px;letter-spacing:0.316px"><span class="a">rel</span><span class="e">=</span></div>
<div class="cl" id="s8_2" style="left:112.7px;top:98px;letter-spacing:0.075px"><span class="s">"canonical"</span> </div>
<div class="cl" id="s8_3" style="left:191.8px;top:98px;letter-spacing:0.455px"><span class="a">href</span><span class="e">=</span></div>
<div class="cl" id="s8_4" style="left:228.7px;top:98px;letter-spacing:2.472px"><span class="s">"</span></div>
<div class="cl" id="s8_5" style="left:236.5px;top:98px;letter-spacing:0.337px">{{ </div>
<div class="cl" id="s8_6" style="left:251.7px;top:98px;letter-spacing:0.102px"><span class="v">canonical<span class="u">_</span>url</span> </div>
<div class="cl" id="s8_7" style="left:345.7px;top:98px;letter-spacing:1.234px">}}</div>
<div class="cl" id="s8_8" style="left:358.2px;top:98px;letter-spacing:-0.128px"><span class="s">"</span></div>
<div class="cl" id="s8_9" style="left:363.4px;top:98px;letter-spacing:1.234px">&gt;</div>
<div class="cl" id="s10_0" style="left:51.8px;top:126px;letter-spacing:-0.505px">{% </div>
<div class="cl" id="s10_1" style="left:72.8px;top:126px;letter-spacing:0.509px"><span class="k">if</span><span class="v"> </span></div>
<div class="cl" id="s10_2" style="left:86.0px;top:126px;letter-spacing:0.425px"><span class="v">settings.</span></div>
<div class="cl" id="s10_3" style="left:145.7px;top:126px;letter-spacing:-0.013px"><span class="p">favicon</span><span class="v"> </span></div>
<div class="cl" id="s10_4" style="left:197.3px;top:126px;letter-spacing:-0.003px"><span class="v">!= blank </span></div>
<div class="cl" id="s10_5" style="left:254.4px;top:126px;letter-spacing:0.270px">%}</div>
<div class="cl" id="s11_0" style="left:59.2px;top:140px;letter-spacing:-0.173px">&lt;link </div>
<div class="cl" id="s11_1" style="left:93.6px;top:140px;letter-spacing:0.341px"><span class="a">rel</span><span class="e">=</span></div>
<div class="cl" id="s11_2" style="left:120.4px;top:140px;letter-spacing:0.389px"><span class="s">"shortcut icon"</span> </div>
<div class="cl" id="s11_3" style="left:226.5px;top:140px;letter-spacing:0.315px"><span class="a">href</span><span class="e">=</span></div>
<div class="cl" id="s11_4" style="left:262.7px;top:140px;letter-spacing:2.500px"><span class="s">"</span></div>
<div class="cl" id="s11_5" style="left:270.6px;top:140px;letter-spacing:0.471px">{{ </div>
<div class="cl" id="s11_6" style="left:286.2px;top:140px;letter-spacing:0.447px"><span class="v">settings.</span></div>
<div class="cl" id="s11_7" style="left:346.1px;top:140px;letter-spacing:-0.175px"><span class="p">favicon</span><span class="v"> </span></div>
<div class="cl" id="s11_8" style="left:396.4px;top:140px;letter-spacing:0.461px"><span class="v">| </span></div>
<div class="cl" id="s11_9" style="left:405.4px;top:140px;letter-spacing:0.202px"><span class="f2">img<span class="u">_</span>url</span></div>
<div class="cl" id="s11_10" style="left:456.0px;top:140px;letter-spacing:0.278px"><span class="v">: </span></div>
<div class="cl" id="s11_11" style="left:464.9px;top:140px;letter-spacing:0.865px"><span class="q">'32x32'</span> </div>
<div class="cl" id="s11_12" style="left:522.6px;top:140px;letter-spacing:0.934px">}}</div>
<div class="cl" id="s11_13" style="left:534.5px;top:140px;letter-spacing:0.500px"><span class="s">"</span> </div>
<div class="cl" id="s11_14" style="left:545.0px;top:140px;letter-spacing:0.575px"><span class="a">type</span><span class="e">=</span></div>
<div class="cl" id="s11_15" style="left:585.0px;top:140px;letter-spacing:0.491px"><span class="s">"image/png"</span></div>
<div class="cl" id="s11_16" style="left:671.1px;top:140px;letter-spacing:0.834px">&gt;</div>
<div class="cl" id="s12_0" style="left:51.8px;top:154px;letter-spacing:-0.505px">{% </div>
<div class="cl" id="s12_1" style="left:72.8px;top:154px;letter-spacing:0.116px"><span class="k">endif</span> </div>
<div class="cl" id="s12_2" style="left:110.2px;top:154px;letter-spacing:0.520px">%}</div>
<div class="cl" id="s14_0" style="left:51.8px;top:182px;letter-spacing:-0.304px">{%- </div>
<div class="cl" id="s14_1" style="left:78.1px;top:182px;letter-spacing:-0.119px"><span class="k">assign</span><span class="v"> </span></div>
<div class="cl" id="s14_2" style="left:124.8px;top:182px;letter-spacing:0.180px"><span class="v">formatted<span class="u">_</span>initial<span class="u">_</span>value </span></div>
<div class="cl" id="s14_3" style="left:283.4px;top:182px;letter-spacing:1.531px"><span class="k">=</span><span class="v"> </span></div>
<div class="cl" id="s14_4" style="left:299.4px;top:182px;letter-spacing:0.408px"><span class="v">gift<span class="u">_</span>card.</span></div>
<div class="cl" id="s14_5" style="left:365.2px;top:182px;letter-spacing:0.074px"><span class="p">initial<span class="u">_</span>value</span><span class="v"> </span></div>
<div class="cl" id="s14_6" style="left:448.8px;top:182px;letter-spacing:0.236px"><span class="v">| money<span class="u">_</span>without<span class="u">_</span>trailing<span class="u">_</span>zeros: </span></div>
<div class="cl" id="s14_7" style="left:671.2px;top:182px;letter-spacing:0.300px"><span class="v">gift<span class="u">_</span>card.currency </span></div>
<div class="cl" id="s14_8" style="left:800.3px;top:182px;letter-spacing:0.619px">-%}</div>
<div class="cl" id="s15_0" style="left:51.8px;top:196px;letter-spacing:-0.304px">{%- </div>
<div class="cl" id="s15_1" style="left:78.1px;top:196px;letter-spacing:-0.119px"><span class="k">assign</span><span class="v"> </span></div>
<div class="cl" id="s15_2" style="left:124.8px;top:196px;letter-spacing:0.239px"><span class="v">formatted<span class="u">_</span>initial<span class="u">_</span>value<span class="u">_</span>stripped </span></div>
<div class="cl" id="s15_3" style="left:348.7px;top:196px;letter-spacing:1.231px"><span class="k">=</span><span class="v"> </span></div>
<div class="cl" id="s15_4" style="left:364.1px;top:196px;letter-spacing:0.255px"><span class="v">formatted<span class="u">_</span>initial<span class="u">_</span>value </span></div>
<div class="cl" id="s15_5" style="left:524.5px;top:196px;letter-spacing:0.380px"><span class="v">| strip<span class="u">_</span>html </span></div>
<div class="cl" id="s15_6" style="left:606.7px;top:196px;letter-spacing:0.219px">-%}</div>
<div class="cl" id="s16_0" style="left:51.4px;top:210px;letter-spacing:0.689px">&lt;title&gt;</div>
<div class="cl" id="s16_1" style="left:97.1px;top:210px;letter-spacing:1.204px">{{ </div>
<div class="cl" id="s16_2" style="left:114.9px;top:210px;letter-spacing:0.295px"><span class="q">'gift<span class="u">_</span>cards.issued.title<span class="u">_</span>html'</span><span class="v"> </span></div>
<div class="cl" id="s16_3" style="left:310.7px;top:210px;letter-spacing:0.711px"><span class="v">| </span></div>
<div class="cl" id="s16_4" style="left:320.2px;top:210px;letter-spacing:0.828px"><span class="f2">t</span></div>
<div class="cl" id="s16_5" style="left:325.2px;top:210px;letter-spacing:0.200px"><span class="v">: value: formatted<span class="u">_</span>initial<span class="u">_</span>value<span class="u">_</span>stripped, </span></div>
<div class="cl" id="s16_6" style="left:606.5px;top:210px;letter-spacing:-0.003px"><span class="v">shop: shop.name </span></div>
<div class="cl" id="s16_7" style="left:725.7px;top:210px;letter-spacing:1.084px">}}</div>
<div class="cl" id="s16_8" style="left:737.9px;top:210px;letter-spacing:0.834px">&lt;/title&gt;</div>
<div class="cl" id="s18_0" style="left:51.4px;top:238px;letter-spacing:0.020px">&lt;meta </div>
<div class="cl" id="s18_1" style="left:97.8px;top:238px;letter-spacing:0.221px"><span class="a">name</span><span class="e">=</span></div>
<div class="cl" id="s18_2" style="left:145.2px;top:238px;letter-spacing:0.266px"><span class="s">"description"</span> </div>
<div class="cl" id="s18_3" style="left:236.3px;top:238px;letter-spacing:0.577px"><span class="a">content</span><span class="e">=</span></div>
<div class="cl" id="s18_4" style="left:298.9px;top:238px;letter-spacing:2.500px"><span class="s">"</span></div>
<div class="cl" id="s18_5" style="left:306.8px;top:238px;letter-spacing:1.204px">{{ </div>
<div class="cl" id="s18_6" style="left:324.6px;top:238px;letter-spacing:0.200px"><span class="q">'gift<span class="u">_</span>cards.issued.subtext'</span><span class="v"> </span></div>
<div class="cl" id="s18_7" style="left:505.2px;top:238px;letter-spacing:0.511px"><span class="v">| </span></div>
<div class="cl" id="s18_8" style="left:514.3px;top:238px;letter-spacing:1.078px"><span class="f2">t</span> </div>
<div class="cl" id="s18_9" style="left:524.8px;top:238px;letter-spacing:0.934px">}}</div>
<div class="cl" id="s18_10" style="left:536.7px;top:238px;letter-spacing:0.672px"><span class="s">"</span></div>
<div class="cl" id="s18_11" style="left:542.7px;top:238px;letter-spacing:0.334px">&gt;</div>
<div class="cl" id="s20_0" style="left:51.8px;top:266px;letter-spacing:0.204px">{{ </div>
<div class="cl" id="s20_1" style="left:66.6px;top:266px;letter-spacing:0.127px"><span class="q">'theme.scss.css'</span><span class="v"> </span></div>
<div class="cl" id="s20_2" style="left:181.2px;top:266px;letter-spacing:0.161px"><span class="v">| </span></div>
<div class="cl" id="s20_3" style="left:189.6px;top:266px;letter-spacing:0.005px"><span class="f2">asset<span class="u">_</span>url</span><span class="v"> </span></div>
<div class="cl" id="s20_4" style="left:254.7px;top:266px;letter-spacing:0.161px"><span class="v">| </span></div>
<div class="cl" id="s20_5" style="left:263.1px;top:266px;letter-spacing:0.339px"><span class="f2">stylesheet<span class="u">_</span>tag</span> </div>
<div class="cl" id="s20_6" style="left:369.1px;top:266px;letter-spacing:1.034px">}}</div>
<div class="cl" id="s21_0" style="left:51.8px;top:280px;letter-spacing:0.204px">{{ </div>
<div class="cl" id="s21_1" style="left:66.6px;top:280px;letter-spacing:0.208px"><span class="q">'gift-card.scss.css'</span><span class="v"> </span></div>
<div class="cl" id="s21_2" style="left:195.9px;top:280px;letter-spacing:0.511px"><span class="v">| </span></div>
<div class="cl" id="s21_3" style="left:205.0px;top:280px;letter-spacing:0.005px"><span class="f2">asset<span class="u">_</span>url</span><span class="v"> </span></div>
<div class="cl" id="s21_4" style="left:270.1px;top:280px;letter-spacing:0.161px"><span class="v">| </span></div>
<div class="cl" id="s21_5" style="left:278.5px;top:280px;letter-spacing:0.339px"><span class="f2">stylesheet<span class="u">_</span>tag</span> </div>
<div class="cl" id="s21_6" style="left:384.5px;top:280px;letter-spacing:0.884px">}}</div>
<div class="cl" id="s23_0" style="left:51.4px;top:308px;letter-spacing:0.204px">&lt;script </div>
<div class="cl" id="s23_1" style="left:101.8px;top:308px;letter-spacing:0.209px"><span class="a">src</span><span class="e">=</span></div>
<div class="cl" id="s23_2" style="left:131.4px;top:308px;letter-spacing:2.500px"><span class="s">"</span></div>
<div class="cl" id="s23_3" style="left:139.3px;top:308px;letter-spacing:0.338px">{{ </div>
<div class="cl" id="s23_4" style="left:154.5px;top:308px;letter-spacing:0.363px"><span class="q">'vendor/qrcode.js'</span><span class="v"> </span></div>
<div class="cl" id="s23_5" style="left:282.2px;top:308px;letter-spacing:0.161px"><span class="v">| </span></div>
<div class="cl" id="s23_6" style="left:290.6px;top:308px;letter-spacing:0.265px"><span class="f2">shopify<span class="u">_</span>asset<span class="u">_</span>url</span> </div>
<div class="cl" id="s23_7" style="left:416.3px;top:308px;letter-spacing:0.934px">}}</div>
<div class="cl" id="s23_8" style="left:428.2px;top:308px;letter-spacing:0.250px"><span class="s">"</span> </div>
<div class="cl" id="s23_9" style="left:438.2px;top:308px;letter-spacing:0.389px"><span class="a">defer</span><span class="e">=</span></div>
<div class="cl" id="s23_10" style="left:483.5px;top:308px;letter-spacing:0.394px"><span class="s">"defer"</span></div>
<div class="cl" id="s23_11" style="left:531.1px;top:308px;letter-spacing:0.870px">&gt;&lt;/script&gt;</div>
<div class="cl" id="s25_0" style="left:51.4px;top:336px;letter-spacing:0.204px">&lt;script </div>
<div class="cl" id="s25_1" style="left:101.8px;top:336px;letter-spacing:0.334px"><span class="a">src</span><span class="e">=</span></div>
<div class="cl" id="s25_2" style="left:131.9px;top:336px;letter-spacing:2.372px"><span class="s">"</span></div>
<div class="cl" id="s25_3" style="left:139.6px;top:336px;letter-spacing:0.237px">{{ </div>
<div class="cl" id="s25_4" style="left:154.5px;top:336px;letter-spacing:0.322px"><span class="q">'vendor.js'</span><span class="v"> </span></div>
<div class="cl" id="s25_5" style="left:228.3px;top:336px;letter-spacing:0.461px"><span class="v">| </span></div>
<div class="cl" id="s25_6" style="left:237.3px;top:336px;letter-spacing:0.115px"><span class="f2">asset<span class="u">_</span>url</span> </div>
<div class="cl" id="s25_7" style="left:303.5px;top:336px;letter-spacing:1.034px">}}</div>
<div class="cl" id="s25_8" style="left:315.6px;top:336px;letter-spacing:0.650px"><span class="s">"</span> </div>
<div class="cl" id="s25_9" style="left:326.4px;top:336px;letter-spacing:0.272px"><span class="a">defer</span><span class="e">=</span></div>
<div class="cl" id="s25_10" style="left:371.0px;top:336px;letter-spacing:0.465px"><span class="s">"defer"</span></div>
<div class="cl" id="s25_11" style="left:419.1px;top:336px;letter-spacing:0.840px">&gt;&lt;/script&gt;</div>
<div class="cl" id="s27_0" style="left:51.4px;top:364px;letter-spacing:0.204px">&lt;script </div>
<div class="cl" id="s27_1" style="left:101.8px;top:364px;letter-spacing:0.334px"><span class="a">src</span><span class="e">=</span></div>
<div class="cl" id="s27_2" style="left:131.9px;top:364px;letter-spacing:2.372px"><span class="s">"</span></div>
<div class="cl" id="s27_3" style="left:139.6px;top:364px;letter-spacing:0.237px">{{ </div>
<div class="cl" id="s27_4" style="left:154.5px;top:364px;letter-spacing:0.454px"><span class="q">'gift-card.js'</span><span class="v"> </span></div>
<div class="cl" id="s27_5" style="left:240.4px;top:364px;letter-spacing:0.311px"><span class="v">| </span></div>
<div class="cl" id="s27_6" style="left:249.1px;top:364px;letter-spacing:0.115px"><span class="f2">asset<span class="u">_</span>url</span> </div>
<div class="cl" id="s27_7" style="left:315.3px;top:364px;letter-spacing:1.134px">}}</div>
<div class="cl" id="s27_8" style="left:327.6px;top:364px;letter-spacing:0.550px"><span class="s">"</span> </div>
<div class="cl" id="s27_9" style="left:338.2px;top:364px;letter-spacing:0.272px"><span class="a">defer</span><span class="e">=</span></div>
<div class="cl" id="s27_10" style="left:382.8px;top:364px;letter-spacing:0.465px"><span class="s">"defer"</span></div>
<div class="cl" id="s27_11" style="left:430.9px;top:364px;letter-spacing:0.790px">&gt;&lt;/script&gt;</div>
<div class="cl" id="s29_0" style="left:51.4px;top:392px;letter-spacing:0.330px">&lt;script&gt;</div>
<div class="cl" id="s30_0" style="left:58.2px;top:406px;letter-spacing:0.071px"><span class="j">var</span> </div>
<div class="cl" id="s30_1" style="left:83.5px;top:406px;letter-spacing:0.200px">theme = {</div>
<div class="cl" id="s31_0" style="left:65.7px;top:420px;letter-spacing:0.387px"><span class="v">strings</span></div>
<div class="cl" id="s31_1" style="left:112.6px;top:420px;letter-spacing:0.080px">: {</div>
<div class="cl" id="s32_0" style="left:73.6px;top:434px;letter-spacing:0.025px"><span class="v">qrImageAlt</span></div>
<div class="cl" id="s32_1" style="left:146.4px;top:434px;letter-spacing:1.228px">: </div>
<div class="cl" id="s32_2" style="left:157.2px;top:434px;letter-spacing:1.471px">{{ </div>
<div class="cl" id="s32_3" style="left:175.8px;top:434px;letter-spacing:0.128px"><span class="q">'gift<span class="u">_</span>cards.issued.qr<span class="u">_</span>image<span class="u">_</span>alt'</span><span class="v"> </span></div>
<div class="cl" id="s32_4" style="left:393.4px;top:434px;letter-spacing:0.711px"><span class="v">| </span></div>
<div class="cl" id="s32_5" style="left:402.9px;top:434px;letter-spacing:-0.122px"><span class="f2">t</span><span class="v"> </span></div>
<div class="cl" id="s32_6" style="left:411.0px;top:434px;letter-spacing:0.311px"><span class="v">| </span></div>
<div class="cl" id="s32_7" style="left:419.7px;top:434px;letter-spacing:0.119px"><span class="f2">json</span> </div>
<div class="cl" id="s32_8" style="left:452.0px;top:434px;letter-spacing:0.684px">}}</div>
<div class="cl" id="s33_0" style="left:66.9px;top:448px;letter-spacing:0.284px">}</div>
<div class="cl" id="s34_0" style="left:59.0px;top:462px;letter-spacing:0.606px">};</div>
<div class="cl" id="s35_0" style="left:51.5px;top:476px;letter-spacing:0.585px">&lt;/script&gt;</div>
<div class="cl" id="s37_0" style="left:51.8px;top:504px;letter-spacing:0.204px">{{ </div>
<div class="cl" id="s37_1" style="left:66.6px;top:504px;letter-spacing:0.373px"><span class="v">content<span class="u">_</span>for<span class="u">_</span>header</span> </div>
<div class="cl" id="s37_2" style="left:208.0px;top:504px;letter-spacing:1.134px">}}</div>
<div class="cl" id="s38_0" style="left:43.0px;top:518px;letter-spacing:0.434px">&lt;/head&gt;</div>
<div class="cl" id="s40_0" style="left:43.0px;top:546px;letter-spacing:0.122px">&lt;body </div>
<div class="cl" id="s40_1" style="left:89.2px;top:546px;letter-spacing:-0.042px"><span class="a">class</span><span class="e">=</span></div>
<div class="cl" id="s40_2" style="left:131.9px;top:546px;letter-spacing:0.486px"><span class="s">"template-giftcard"</span></div>
<div class="cl" id="s40_3" style="left:263.5px;top:546px;letter-spacing:1.334px">&gt;</div>
<div class="cl" id="s41_0" style="left:51.8px;top:560px;letter-spacing:0.204px">{{ </div>
<div class="cl" id="s41_1" style="left:66.6px;top:560px;letter-spacing:0.562px"><span class="v">content<span class="u">_</span>for<span class="u">_</span>layout</span> </div>
<div class="cl" id="s41_2" style="left:204.9px;top:560px;letter-spacing:0.634px">}}</div>
<div class="cl" id="s42_0" style="left:51.5px;top:574px;letter-spacing:-0.302px">&lt;ul </div>
<div class="cl" id="s42_1" style="left:74.9px;top:574px;letter-spacing:-0.042px"><span class="a">class</span><span class="e">=</span></div>
<div class="cl" id="s42_2" style="left:117.6px;top:574px;letter-spacing:0.103px"><span class="s">"visually-hidden"</span> </div>
<div class="cl" id="s42_3" style="left:233.5px;top:574px;letter-spacing:-0.019px"><span class="a">aria-hidden</span><span class="e">=</span></div>
<div class="cl" id="s42_4" style="left:317.1px;top:574px;letter-spacing:0.800px"><span class="s">"true"</span></div>
<div class="cl" id="s42_5" style="left:358.4px;top:574px;letter-spacing:1.134px">&gt;</div>
<div class="cl" id="s43_0" style="left:58.7px;top:588px;letter-spacing:-0.223px">&lt;li </div>
<div class="cl" id="s43_1" style="left:77.4px;top:588px;letter-spacing:0.216px"><span class="a">id</span><span class="e">=</span></div>
<div class="cl" id="s43_2" style="left:98.5px;top:588px;letter-spacing:0.237px"><span class="s">"a11y-new-window-message"</span></div>
<div class="cl" id="s43_3" style="left:299.9px;top:588px;letter-spacing:1.634px">&gt;</div>
<div class="cl" id="s43_4" style="left:310.3px;top:588px;letter-spacing:0.638px">{{ </div>
<div class="cl" id="s43_5" style="left:326.4px;top:588px;letter-spacing:0.050px"><span class="q">'general.accessibility.link<span class="u">_</span>messages.new<span class="u">_</span>window'</span><span class="v"> </span></div>
<div class="cl" id="s43_6" style="left:665.3px;top:588px;letter-spacing:0.661px"><span class="v">| </span></div>
<div class="cl" id="s43_7" style="left:674.7px;top:588px;letter-spacing:0.978px"><span class="f2">t</span> </div>
<div class="cl" id="s43_8" style="left:685.0px;top:588px;letter-spacing:0.934px">}}</div>
<div class="cl" id="s43_9" style="left:696.9px;top:588px;letter-spacing:0.628px">&lt;/li&gt;</div>
<div class="cl" id="s44_0" style="left:58.7px;top:602px;letter-spacing:-0.223px">&lt;li </div>
<div class="cl" id="s44_1" style="left:77.4px;top:602px;letter-spacing:0.216px"><span class="a">id</span><span class="e">=</span></div>
<div class="cl" id="s44_2" style="left:98.5px;top:602px;letter-spacing:0.296px"><span class="s">"a11y-external-message"</span></div>
<div class="cl" id="s44_3" style="left:271.6px;top:602px;letter-spacing:1.534px">&gt;</div>
<div class="cl" id="s44_4" style="left:281.9px;top:602px;letter-spacing:0.638px">{{ </div>
<div class="cl" id="s44_5" style="left:298.0px;top:602px;letter-spacing:0.057px"><span class="q">'general.accessibility.link<span class="u">_</span>messages.external'</span><span class="v"> </span></div>
<div class="cl" id="s44_6" style="left:604.6px;top:602px;letter-spacing:0.761px"><span class="v">| </span></div>
<div class="cl" id="s44_7" style="left:614.2px;top:602px;letter-spacing:0.878px"><span class="f2">t</span> </div>
<div class="cl" id="s44_8" style="left:624.3px;top:602px;letter-spacing:1.084px">}}</div>
<div class="cl" id="s44_9" style="left:636.5px;top:602px;letter-spacing:0.608px">&lt;/li&gt;</div>
<div class="cl" id="s45_0" style="left:58.7px;top:616px;letter-spacing:-0.223px">&lt;li </div>
<div class="cl" id="s45_1" style="left:77.4px;top:616px;letter-spacing:0.216px"><span class="a">id</span><span class="e">=</span></div>
<div class="cl" id="s45_2" style="left:98.5px;top:616px;letter-spacing:0.208px"><span class="s">"a11y-new-window-external-message"</span></div>
<div class="cl" id="s45_3" style="left:359.4px;top:616px;letter-spacing:1.534px">&gt;</div>
<div class="cl" id="s45_4" style="left:369.7px;top:616px;letter-spacing:0.637px">{{ </div>
<div class="cl" id="s45_5" style="left:385.8px;top:616px;letter-spacing:0.078px"><span class="q">'general.accessibility.link<span class="u">_</span>messages.new<span class="u">_</span>window<span class="u">_</span>and<span class="u">_</span>external'</span><span class="v"> </span></div>
<div class="cl" id="s45_6" style="left:822.2px;top:616px;letter-spacing:0.661px"><span class="v">| </span></div>
<div class="cl" id="s45_7" style="left:831.6px;top:616px;letter-spacing:0.978px"><span class="f2">t</span> </div>
<div class="cl" id="s45_8" style="left:841.9px;top:616px;letter-spacing:0.934px">}}</div>
<div class="cl" id="s45_9" style="left:853.8px;top:616px;letter-spacing:0.588px">&lt;/li&gt;</div>
<div class="cl" id="s46_0" style="left:51.5px;top:630px;letter-spacing:0.545px">&lt;/ul&gt;</div>
<div class="cl" id="s47_0" style="left:43.0px;top:644px;letter-spacing:0.683px">&lt;/body&gt;</div>
<div class="cl" id="s48_0" style="left:43.0px;top:658px;letter-spacing:0.838px">&lt;/html&gt;</div>
</div>
</div><div id="ban"><span>ストアの移管が無効です。このストアをマーチャントに譲渡したりプランの変更をしたりすることはできません。<a>ストア移行について詳しく知る</a></span><svg style="position:absolute;left:1655px;top:12px;width:12px;height:12px" viewBox="0 0 12 12"><path d="M1 1l10 10M11 1L1 11" stroke="#57636f" stroke-width="1.800" stroke-linecap="round" fill="none"/></svg></div><div id="strip"><i></i></div></body>
</html>
